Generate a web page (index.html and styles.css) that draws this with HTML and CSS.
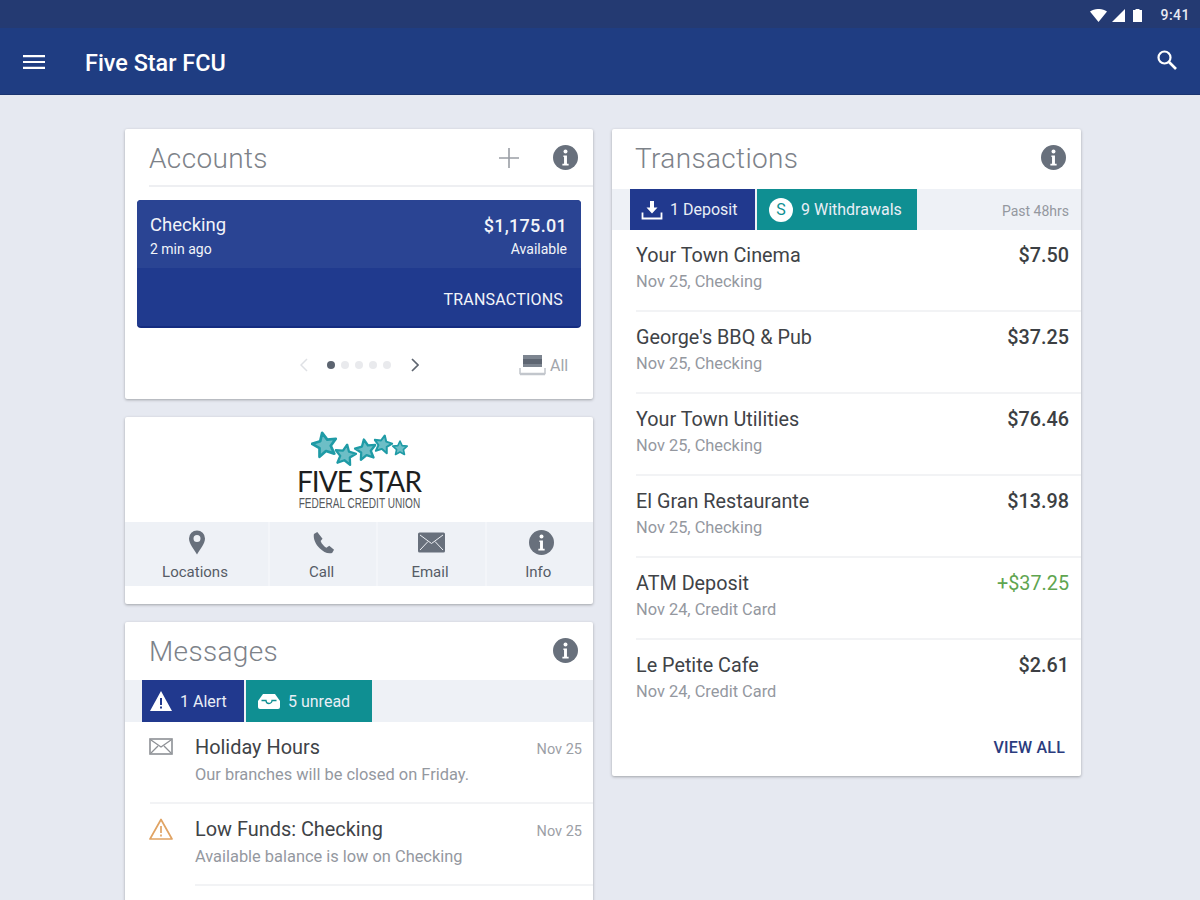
FILE: index.html
```html
<!DOCTYPE html>
<html lang="en">
<head>
    <meta charset="UTF-8">
    <meta name="viewport" content="width=device-width, initial-scale=1.0">
    <title>Five Star FCU</title>
    <link rel="stylesheet" href="styles.css">
</head>
<body>

    <svg class="sprite" width="0" height="0">
        <symbol id="i-info" viewBox="0 0 24 24">
            <circle cx="12" cy="12" r="12" fill="currentColor"/>
            <circle cx="12" cy="6.2" r="1.9" fill="#fff"/>
            <path d="M10 10h3.4v8H15v1.6H9V18h1.6v-6.4H10z" fill="#fff"/>
        </symbol>
        <symbol id="i-star" viewBox="0 0 24 24">
            <polygon points="12,1.5 15.2,8.4 22.8,9.2 17.1,14.3 18.7,21.8 12,18 5.3,21.8 6.9,14.3 1.2,9.2 8.8,8.4" fill="#6dbec6" stroke="#1f9ba6" stroke-width="2.4" stroke-linejoin="round"/>
        </symbol>
    </svg>

    <div class="statusbar">
        <svg class="st-wifi" width="17" height="13" viewBox="0 0 17 13"><path d="M0 2.6C5-.9 12-.9 17 2.6L8.500 13z" fill="#fff"/></svg>
        <svg class="st-signal" width="13" height="13" viewBox="0 0 13 13"><path d="M13 0v13H0z" fill="#fff"/></svg>
        <svg class="st-battery" width="9" height="13" viewBox="0 0 9 13"><path d="M2.500 0h4v1H9v12H0V1h2.500z" fill="#fff"/></svg>
        <span class="st-time">9:41</span>
    </div>

    <header class="appbar">
        <svg class="menu-icon" width="22" height="16" viewBox="0 0 22 16"><path d="M0 1h22v2.200H0zM0 6.900h22v2.200H0zM0 12.800h22V15H0z" fill="#fff"/></svg>
        <h1>Five Star FCU</h1>
        <svg class="search-icon" width="22" height="22" viewBox="0 0 22 22"><circle cx="8.500" cy="8.500" r="6" fill="none" stroke="#fff" stroke-width="2.200"/><path d="M13 13l7 7" stroke="#fff" stroke-width="2.600"/></svg>
    </header>

    <main class="dashboard">
        <div class="column">

            <section class="card accounts">
                <div class="card-head with-line">
                    <h2>Accounts</h2>
                    <svg class="plus-icon" width="20" height="20" viewBox="0 0 20 20"><path d="M9.200 0h1.600v9.200H20v1.600h-9.200V20H9.200v-9.200H0V9.200h9.200z" fill="#9a9ea5"/></svg>
                    <svg class="info-icon"><use href="#i-info"/></svg>
                </div>
                <div class="account-tile">
                    <div class="tile-top">
                        <div class="tile-line">
                            <span class="tile-name">Checking</span>
                            <span class="tile-amount">$1,175.01</span>
                        </div>
                        <div class="tile-line tile-small">
                            <span>2 min ago</span>
                            <span>Available</span>
                        </div>
                    </div>
                    <div class="tile-bottom">TRANSACTIONS</div>
                </div>
                <div class="pager">
                    <svg class="pager-arrow" width="8" height="14" viewBox="0 0 8 14"><path d="M7 1L1 7l6 6" fill="none" stroke="#dfe1e5" stroke-width="1.500"/></svg>
                    <div class="dots">
                        <span class="dot active"></span>
                        <span class="dot"></span>
                        <span class="dot"></span>
                        <span class="dot"></span>
                        <span class="dot"></span>
                    </div>
                    <svg class="pager-arrow" width="8" height="14" viewBox="0 0 8 14"><path d="M1 1l6 6-6 6" fill="none" stroke="#5e6570" stroke-width="1.700"/></svg>
                    <div class="all-link">
                        <svg width="27" height="22" viewBox="0 0 27 22"><path d="M4 1h19v12H4z" fill="#7d8590"/><path d="M4 5h19v5H4z" fill="#5e6672"/><path d="M1 14v5.500h25V14M1 20.500h25" fill="none" stroke="#c2c6cc" stroke-width="1.500"/></svg>
                        <span>All</span>
                    </div>
                </div>
            </section>

            <section class="card branding">
                <div class="logo">
                    <svg class="logo-stars" width="100" height="36" viewBox="0 0 100 36">
                        <use href="#i-star" x="0" y="0" width="27" height="27" transform="rotate(-12 13 13)"/>
                        <use href="#i-star" x="23" y="12" width="23" height="23" transform="rotate(10 34 23)"/>
                        <use href="#i-star" x="43" y="7" width="23" height="23" transform="rotate(-10 54 18)"/>
                        <use href="#i-star" x="62" y="3" width="20" height="20" transform="rotate(12 72 13)"/>
                        <use href="#i-star" x="81" y="9" width="16" height="16"/>
                    </svg>
                    <div class="logo-name">FIVE STAR</div>
                    <div class="logo-sub">FEDERAL CREDIT UNION</div>
                </div>
                <nav class="actions">
                    <div class="action">
                        <svg width="16" height="24" viewBox="0 0 16 24"><path fill-rule="evenodd" d="M8 0a8 8 0 0 1 8 8c0 5-5 11-8 16C5 19 0 13 0 8a8 8 0 0 1 8-8zm0 4.500a3.500 3.500 0 1 0 0 7 3.500 3.500 0 0 0 0-7z" fill="#68707c"/></svg>
                        <span>Locations</span>
                    </div>
                    <div class="action">
                        <svg width="23" height="24" viewBox="0 0 24 24"><path d="M5.500 1L2 3c-1 5 2 11 6 15s8 6 13 5l2-3.500-5-4-3 2c-2-1-5-4-6-7l2-2.500z" fill="#68707c"/></svg>
                        <span>Call</span>
                    </div>
                    <div class="action">
                        <svg width="27" height="22" viewBox="0 0 27 22"><rect y="1" width="27" height="20" rx="1.500" fill="#68707c"/><path d="M2 3.500l11.500 8.500L25 3.500M2 18.500l8-8.500M25 18.500l-8-8.500" fill="none" stroke="#eef1f6" stroke-width="1"/></svg>
                        <span>Email</span>
                    </div>
                    <div class="action">
                        <svg class="info-icon action-info"><use href="#i-info"/></svg>
                        <span>Info</span>
                    </div>
                </nav>
            </section>

            <section class="card messages">
                <div class="card-head">
                    <h2>Messages</h2>
                    <svg class="info-icon"><use href="#i-info"/></svg>
                </div>
                <div class="tab-strip msg-strip">
                    <div class="tab tab-blue alert-tab">
                        <svg width="22" height="20" viewBox="0 0 22 20"><path fill-rule="evenodd" d="M11 0l11 20H0zM10 7v7h2V7zm0 8.500v2h2v-2z" fill="#fff"/></svg>
                        <span>1 Alert</span>
                    </div>
                    <div class="tab tab-teal unread-tab">
                        <svg width="22" height="15" viewBox="0 0 22 15"><path d="M5 0h12l5 7v6a2 2 0 0 1-2 2H2a2 2 0 0 1-2-2V7z" fill="#fff"/><path d="M3.500 6.500h4.500a3 3 0 0 0 6 0h4.500" fill="none" stroke="#0f8f92" stroke-width="1.300"/></svg>
                        <span>5 unread</span>
                    </div>
                </div>
                <div class="msg-row">
                    <svg class="msg-icon" width="24" height="17" viewBox="0 0 24 17"><rect x="1" y="1" width="22" height="15" fill="none" stroke="#8d9095" stroke-width="1.600"/><path d="M2 2l10 7 10-7M2 15l7-7M22 15l-7-7" fill="none" stroke="#8d9095" stroke-width="1.300"/></svg>
                    <div class="msg-body">
                        <div class="msg-title">Holiday Hours</div>
                        <div class="msg-text">Our branches will be closed on Friday.</div>
                    </div>
                    <div class="msg-date">Nov 25</div>
                </div>
                <div class="msg-row short-line">
                    <svg class="msg-icon warn-icon" width="24" height="22" viewBox="0 0 24 22"><path d="M12 1.500L23 21H1z" fill="none" stroke="#e0a363" stroke-width="1.700" stroke-linejoin="round"/><path d="M12 8v7M12 16.500v2" stroke="#e0a363" stroke-width="1.700"/></svg>
                    <div class="msg-body">
                        <div class="msg-title">Low Funds: Checking</div>
                        <div class="msg-text">Available balance is low on Checking</div>
                    </div>
                    <div class="msg-date">Nov 25</div>
                </div>
            </section>

        </div>
        <div class="column">

            <section class="card transactions">
                <div class="card-head">
                    <h2>Transactions</h2>
                    <svg class="info-icon"><use href="#i-info"/></svg>
                </div>
                <div class="tab-strip trans-strip">
                    <div class="tab tab-blue deposit-tab">
                        <svg width="22" height="20" viewBox="0 0 22 20"><path d="M9 1h4v6.500h3.500L11 13.500 5.500 7.500H9z" fill="#fff"/><path d="M1.500 12.500v6h19v-6" fill="none" stroke="#fff" stroke-width="1.800"/></svg>
                        <span>1 Deposit</span>
                    </div>
                    <div class="tab tab-teal withdraw-tab">
                        <span class="dollar">S</span>
                        <span>9 Withdrawals</span>
                    </div>
                    <span class="past">Past 48hrs</span>
                </div>
                <div class="tx-row">
                    <div class="tx-line"><span class="tx-name">Your Town Cinema</span><span class="tx-amount">$7.50</span></div>
                    <div class="tx-sub">Nov 25, Checking</div>
                </div>
                <div class="tx-row">
                    <div class="tx-line"><span class="tx-name">George's BBQ &amp; Pub</span><span class="tx-amount">$37.25</span></div>
                    <div class="tx-sub">Nov 25, Checking</div>
                </div>
                <div class="tx-row">
                    <div class="tx-line"><span class="tx-name">Your Town Utilities</span><span class="tx-amount">$76.46</span></div>
                    <div class="tx-sub">Nov 25, Checking</div>
                </div>
                <div class="tx-row">
                    <div class="tx-line"><span class="tx-name">El Gran Restaurante</span><span class="tx-amount">$13.98</span></div>
                    <div class="tx-sub">Nov 25, Checking</div>
                </div>
                <div class="tx-row">
                    <div class="tx-line"><span class="tx-name">ATM Deposit</span><span class="tx-amount positive">+$37.25</span></div>
                    <div class="tx-sub">Nov 24, Credit Card</div>
                </div>
                <div class="tx-row last">
                    <div class="tx-line"><span class="tx-name">Le Petite Cafe</span><span class="tx-amount">$2.61</span></div>
                    <div class="tx-sub">Nov 24, Credit Card</div>
                </div>
                <div class="view-all">VIEW ALL</div>
            </section>

        </div>
    </main>

</body>
</html>
```

FILE: styles.css
```css
* {
    box-sizing: border-box;
}

html, body {
    height: 900px;
    overflow: hidden;
}

body {
    margin: 0;
    font-family: Roboto, "Liberation Sans", sans-serif;
    background-color: #e6e9f1;
    color: #3a3d42;
}

h1, h2 {
    margin: 0;
    font-weight: 400;
}

.sprite {
    display: block;
    height: 0;
}

/* status bar */
.statusbar {
    height: 28px;
    background-color: #243a72;
    display: flex;
    align-items: center;
    justify-content: flex-end;
    padding: 2px 10px 0 0;
    color: #e8ebf3;
}

.st-wifi {
    margin-right: 5px;
}

.st-signal {
    margin-right: 8px;
}

.st-battery {
    margin-right: 18px;
}

.st-time {
    font-size: 14px;
    font-weight: 500;
    letter-spacing: 0.5px;
}

/* app bar */
.appbar {
    height: 67px;
    background-color: #1f3d82;
    border-bottom: 1px solid #1a3470;
    display: flex;
    align-items: center;
    padding: 2px 22px 0 23px;
    color: #fff;
}

.appbar h1 {
    font-size: 23.4px;
    font-weight: 500;
    margin-left: 40px;
    padding-top: 2px;
    flex: 1;
}

.search-icon {
    margin: 0 0 5px 0;
}

/* layout */
.dashboard {
    display: flex;
    gap: 19px;
    align-items: flex-start;
    padding: 34px 0 0 125px;
}

.column {
    width: 468px;
    display: flex;
    flex-direction: column;
    gap: 18px;
}

.column + .column {
    width: 469px;
}

.card {
    background-color: #fff;
    border-radius: 2px;
    box-shadow: 0 1px 3px rgba(0, 0, 0, 0.3);
}

.card-head {
    height: 58px;
    display: flex;
    align-items: center;
    padding: 0 15px 0 24px;
}

.card-head h2 {
    flex: 1;
    font-size: 28px;
    font-weight: 300;
    color: #7d8289;
    letter-spacing: 0.35px;
}

.transactions .card-head {
    padding-left: 23px;
}

.info-icon {
    width: 25px;
    height: 25px;
    color: #68707c;
}

.card-head .info-icon {
    margin-top: -2px;
}

.plus-icon {
    margin-right: 34px;
}

/* accounts */
.accounts {
    height: 270px;
}

.with-line {
    position: relative;
}

.with-line::after {
    content: "";
    position: absolute;
    left: 24px;
    right: 0;
    bottom: 0;
    height: 2px;
    background-color: #eeeff2;
}

.account-tile {
    margin: 13px 12px 0;
    height: 128px;
    border-radius: 4px;
    overflow: hidden;
    background-color: #203a8e;
    border-bottom: 2px solid #142c80;
    color: #f2f4f9;
}

.tile-top {
    height: 68px;
    background-color: #2a4493;
    padding: 14px 14px 0 13px;
}

.tile-line {
    display: flex;
    justify-content: space-between;
    align-items: center;
}

.tile-name {
    font-size: 18.5px;
}

.tile-amount {
    font-size: 18px;
    font-weight: 500;
    letter-spacing: 0.3px;
}

.tile-small {
    font-size: 14px;
    margin-top: 5px;
}

.tile-bottom {
    font-size: 16px;
    letter-spacing: 0.2px;
    text-align: right;
    padding: 22px 18px 0 0;
}

.pager {
    height: 74px;
    display: flex;
    align-items: center;
    padding-left: 175px;
}

.dots {
    display: flex;
    gap: 6px;
    margin: 0 20px 0 19px;
}

.dot {
    width: 8px;
    height: 8px;
    border-radius: 50%;
    background-color: #e9eaed;
}

.dot.active {
    background-color: #5c6470;
}

.all-link {
    display: flex;
    align-items: center;
    gap: 4px;
    margin-left: 100px;
    font-size: 16px;
    color: #a2a6ac;
}

/* logo and quick actions */
.branding {
    height: 187px;
    padding-top: 14px;
}

.logo {
    height: 91px;
    display: flex;
    flex-direction: column;
    align-items: center;
}

.logo-stars {
    margin-left: 3px;
    flex-shrink: 0;
}

.logo-name {
    font-family: Lato, sans-serif;
    font-size: 28px;
    line-height: 22px;
    letter-spacing: -0.9px;
    margin-top: 3px;
    color: #1d1e20;
}

.logo-sub {
    font-family: "Liberation Sans", sans-serif;
    font-size: 14px;
    line-height: 12px;
    margin-top: 5px;
    color: #55585c;
    white-space: nowrap;
    transform: scaleX(0.72);
}

.actions {
    height: 64px;
    display: grid;
    grid-template-columns: 143px 1fr 1fr 1fr;
    background-color: #eef1f6;
}

.action {
    display: flex;
    flex-direction: column;
    align-items: center;
    padding-top: 8px;
    border-left: 2px solid #f3f5f9;
    font-size: 15px;
    color: #565c66;
}

.action:first-child {
    border-left: none;
}

.action span {
    margin-right: 3px;
}

.action svg {
    height: 25px;
    margin-bottom: 8px;
}

.action-info {
    margin-left: 3px;
}

/* tab strips */
.tab-strip {
    height: 42px;
    background-color: #eef1f6;
    display: flex;
    gap: 2px;
}

.msg-strip {
    padding-left: 17px;
}

.trans-strip {
    height: 41px;
    padding-left: 18px;
    margin-top: 2px;
    align-items: stretch;
}

.tab {
    display: flex;
    align-items: center;
    gap: 8px;
    font-size: 16px;
    color: #e9eef6;
    padding-left: 8px;
}

.tab-blue {
    background-color: #21398e;
}

.tab-teal {
    background-color: #0f8f92;
}

.alert-tab {
    width: 102px;
}

.unread-tab {
    width: 126px;
    padding-left: 12px;
}

.deposit-tab {
    width: 125px;
    padding-left: 11px;
    gap: 7px;
}

.withdraw-tab {
    width: 160px;
    padding-left: 12px;
}

.dollar {
    width: 24px;
    height: 24px;
    border-radius: 50%;
    background-color: #fff;
    color: #0f8f92;
    font-size: 16px;
    text-align: center;
    line-height: 24px;
}

.past {
    margin-left: auto;
    align-self: center;
    padding: 3px 12px 0 0;
    font-size: 14px;
    color: #94989f;
}

/* messages */
.messages {
    height: 320px;
}

.msg-row {
    position: relative;
    height: 82px;
    display: flex;
    align-items: flex-start;
    padding: 14px 11px 0 24px;
}

.msg-row::after {
    content: "";
    position: absolute;
    left: 25px;
    right: 0;
    bottom: 0;
    height: 2px;
    background-color: #f2f3f5;
}

.msg-row.short-line::after {
    left: 70px;
}

.msg-icon {
    width: 24px;
    flex-shrink: 0;
    margin-top: 2px;
}

.warn-icon {
    margin-top: 0;
}

.msg-body {
    flex: 1;
    margin-left: 22px;
}

.msg-title {
    font-size: 19.9px;
    color: #404347;
}

.msg-text {
    font-size: 16.4px;
    color: #94989f;
    margin-top: 6px;
}

.msg-date {
    font-size: 14.5px;
    color: #9ca0a6;
    margin-top: 5px;
}

/* transactions */
.transactions {
    height: 647px;
}

.tx-row {
    position: relative;
    height: 82px;
    padding: 14px 12px 0 24px;
}

.tx-row::after {
    content: "";
    position: absolute;
    left: 24px;
    right: 0;
    bottom: 0;
    height: 2px;
    background-color: #f2f3f5;
}

.tx-row.last::after {
    display: none;
}

.tx-line {
    display: flex;
    justify-content: space-between;
    align-items: center;
}

.tx-name {
    font-size: 19.8px;
    color: #404347;
}

.tx-amount {
    font-size: 19.8px;
    font-weight: 500;
    color: #3c3f43;
}

.tx-amount.positive {
    color: #5fa550;
    font-weight: 400;
}

.tx-sub {
    font-size: 16.4px;
    color: #94989f;
    margin-top: 5px;
}

.view-all {
    text-align: right;
    padding: 16px 16px 0 0;
    font-size: 16px;
    letter-spacing: 0.2px;
    font-weight: 500;
    color: #2b3c7e;
}
```
